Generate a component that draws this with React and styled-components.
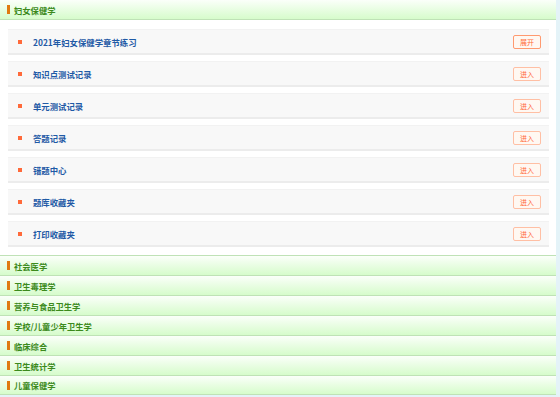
import React from "react";
import styled, {createGlobalStyle} from "styled-components";

const GlobalStyle = createGlobalStyle`
  html, body {
    margin: 0;
    padding: 0;
    background: #e4f3f8;
  }
  body {
    font-family: "Noto Sans CJK SC", "Noto Sans", sans-serif;
  }
  * {
    box-sizing: border-box;
  }
`;

const Page = styled.div`
  width: 556px;
  background: #fff;
`;

const SectionHeader = styled.div`
  height: 20px;
  display: flex;
  align-items: center;
  padding-left: 7px;
  background: linear-gradient(to bottom, #fbfffa 0%, #d6fccb 100%);
  border-top: ${(p) => (p.$first ? "none" : "1px solid #bfe2b6")};
  border-bottom: ${(p) => (p.$first || p.$last ? "1px solid #bfe2b6" : "none")};
  color: #3c8a1c;
  font-size: 8.3px;
  font-weight: bold;
`;

const Marker = styled.span`
  width: 3px;
  height: 9px;
  background: #e07a10;
  margin-right: 4px;
`;

const SectionBody = styled.div`
  display: flex;
  flex-direction: column;
  gap: 6px;
  padding: 9px 7px 8px 8px;
`;

const Card = styled.div`
  height: 26px;
  display: flex;
  align-items: center;
  padding: 0 8px 0 10px;
  background: #f8f8f8;
  border-top: 1px solid #f2f2f2;
  border-bottom: 2px solid #ececec;
`;

const Bullet = styled.span`
  width: 4px;
  height: 4px;
  background: #ff6a3a;
  margin-right: 11px;
`;

const Title = styled.span`
  flex: 1;
  color: #1f5aa6;
  font-size: 8.4px;
  font-weight: bold;
`;

const ActionButton = styled.span`
  width: 28px;
  height: 14px;
  display: flex;
  align-items: center;
  justify-content: center;
  border: 1px solid ${(p) => (p.$strong ? "#ff9a70" : "#ffbfa4")};
  border-radius: 2px;
  background: #fff8f2;
  color: #ff6a3a;
  font-size: 7px;
`;

const items = [
  {title: "2021年妇女保健学章节练习", action: "展开", strong: true},
  {title: "知识点测试记录", action: "进入"},
  {title: "单元测试记录", action: "进入"},
  {title: "答题记录", action: "进入"},
  {title: "错题中心", action: "进入"},
  {title: "题库收藏夹", action: "进入"},
  {title: "打印收藏夹", action: "进入"},
];

const sections = [
  "社会医学",
  "卫生毒理学",
  "营养与食品卫生学",
  "学校/儿童少年卫生学",
  "临床综合",
  "卫生统计学",
  "儿童保健学",
];

export default function App() {
  return (
    <Page>
      <GlobalStyle />
      <SectionHeader $first>
        <Marker />
        妇女保健学
      </SectionHeader>
      <SectionBody>
        {items.map((item) => (
          <Card key={item.title}>
            <Bullet />
            <Title>{item.title}</Title>
            <ActionButton $strong={item.strong}>{item.action}</ActionButton>
          </Card>
        ))}
      </SectionBody>
      {sections.map((name, i) => (
        <SectionHeader key={name} $last={i === sections.length - 1}>
          <Marker />
          {name}
        </SectionHeader>
      ))}
    </Page>
  );
}
